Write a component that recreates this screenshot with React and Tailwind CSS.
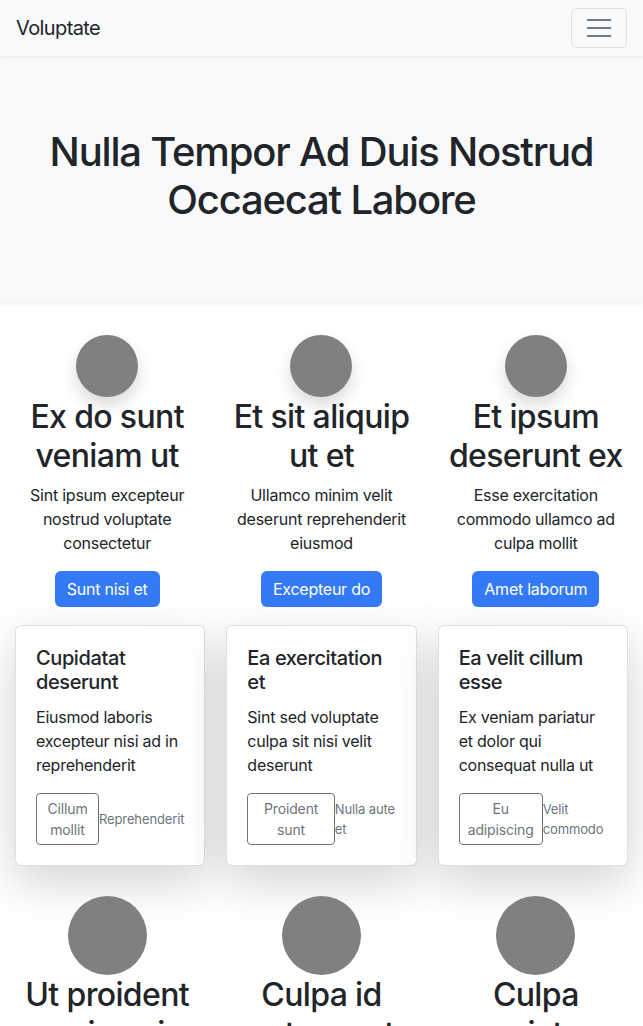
import React from 'react';

const features = [
  { title: 'Ex do sunt veniam ut', text: 'Sint ipsum excepteur nostrud voluptate consectetur', cta: 'Sunt nisi et' },
  { title: 'Et sit aliquip ut et', text: 'Ullamco minim velit deserunt reprehenderit eiusmod', cta: 'Excepteur do' },
  { title: 'Et ipsum deserunt ex', text: 'Esse exercitation commodo ullamco ad culpa mollit', cta: 'Amet laborum' },
];

const cards = [
  { title: 'Cupidatat deserunt', text: 'Eiusmod laboris excepteur nisi ad in reprehenderit', btn: 'Cillum mollit', link: 'Reprehenderit' },
  { title: 'Ea exercitation et', text: 'Sint sed voluptate culpa sit nisi velit deserunt', btn: 'Proident sunt', link: 'Nulla aute et' },
  { title: 'Ea velit cillum esse', text: 'Ex veniam pariatur et dolor qui consequat nulla ut', btn: 'Eu adipiscing', link: 'Velit commodo' },
];

const more = [
  { title: 'Ut proident quis qui', text: 'Anim velit laboris nisi aliqua deserunt', cta: 'Dolor sit' },
  { title: 'Culpa id aute amet', text: 'Magna officia cillum ea proident minim', cta: 'Quis enim' },
  { title: 'Culpa pariatur', text: 'Irure dolore eiusmod tempor aliqua sint', cta: 'Velit esse' },
];

const Feature = ({ item, big }) => (
  <div className="px-3 flex flex-col items-center text-center">
    <div
      className={
        big
          ? 'w-[79px] h-[79px] rounded-full bg-[#808080]'
          : 'w-[62px] h-[62px] rounded-full bg-[#808080] shadow-[0_0.5rem_1rem_rgba(0,0,0,0.15)]'
      }
    />
    <h3 className="text-[32px] leading-[38.5px] font-medium tracking-[-0.02em] text-[#212529] mt-px">{item.title}</h3>
    <p className="mt-2 text-base leading-6 tracking-[-0.015em]">{item.text}</p>
    <button className="mt-4 h-9 px-3 rounded-md bg-[#3479f6] text-white text-base tracking-[-0.015em]">{item.cta}</button>
  </div>
);

const Card = ({ card }) => (
  <div className="bg-white border border-black/[0.125] rounded-md shadow-[0_1rem_3rem_rgba(0,0,0,0.175)] p-5">
    <h5 className="text-[20px] leading-6 font-medium tracking-[-0.02em] mb-[11px]">{card.title}</h5>
    <p className="text-base leading-6 tracking-[-0.015em] mb-4">{card.text}</p>
    <div className="flex items-center">
      <button className="border border-[#6c757d] rounded text-[#6c757d] text-sm leading-[21px] px-2 py-1 tracking-[-0.01em]">
        {card.btn}
      </button>
      <span className="text-[13px] leading-5 text-[#6c757d] tracking-[-0.01em]">{card.link}</span>
    </div>
  </div>
);

export default function App() {
  return (
    <div className="min-h-screen bg-white text-[#212529] font-['Inter','Liberation_Sans',sans-serif]">
      <nav className="relative z-20 h-14 bg-[#f8f9fa] shadow-[0_1px_3px_rgba(0,0,0,0.08)] flex items-center justify-between px-4">
        <span className="text-[20px] leading-[30px] tracking-[-0.03em]">Voluptate</span>
        <button className="w-14 h-10 border border-black/10 rounded-md flex flex-col items-center justify-center gap-[6px]">
          <span className="block w-6 h-[2px] bg-[#212529]/60" />
          <span className="block w-6 h-[2px] bg-[#212529]/60" />
          <span className="block w-6 h-[2px] bg-[#212529]/60" />
        </button>
      </nav>

      <header className="relative z-10 h-[246px] bg-[#f8f9fa] shadow-[0_2px_4px_rgba(0,0,0,0.06)] flex items-start justify-center pt-[72px] px-3">
        <h1 className="text-[40px] leading-[48px] font-medium tracking-[-0.03em] text-center">
          Nulla Tempor Ad Duis Nostrud Occaecat Labore
        </h1>
      </header>

      <section className="grid grid-cols-3 pt-[33px]">
        {features.map((f) => (
          <Feature key={f.title} item={f} />
        ))}
      </section>

      <section className="grid grid-cols-3 gap-x-[21px] px-[15px] mt-[18px]">
        {cards.map((c) => (
          <Card key={c.title} card={c} />
        ))}
      </section>

      <section className="grid grid-cols-3 pt-[30px] pb-12">
        {more.map((f) => (
          <Feature key={f.title} item={f} big />
        ))}
      </section>
    </div>
  );
}
